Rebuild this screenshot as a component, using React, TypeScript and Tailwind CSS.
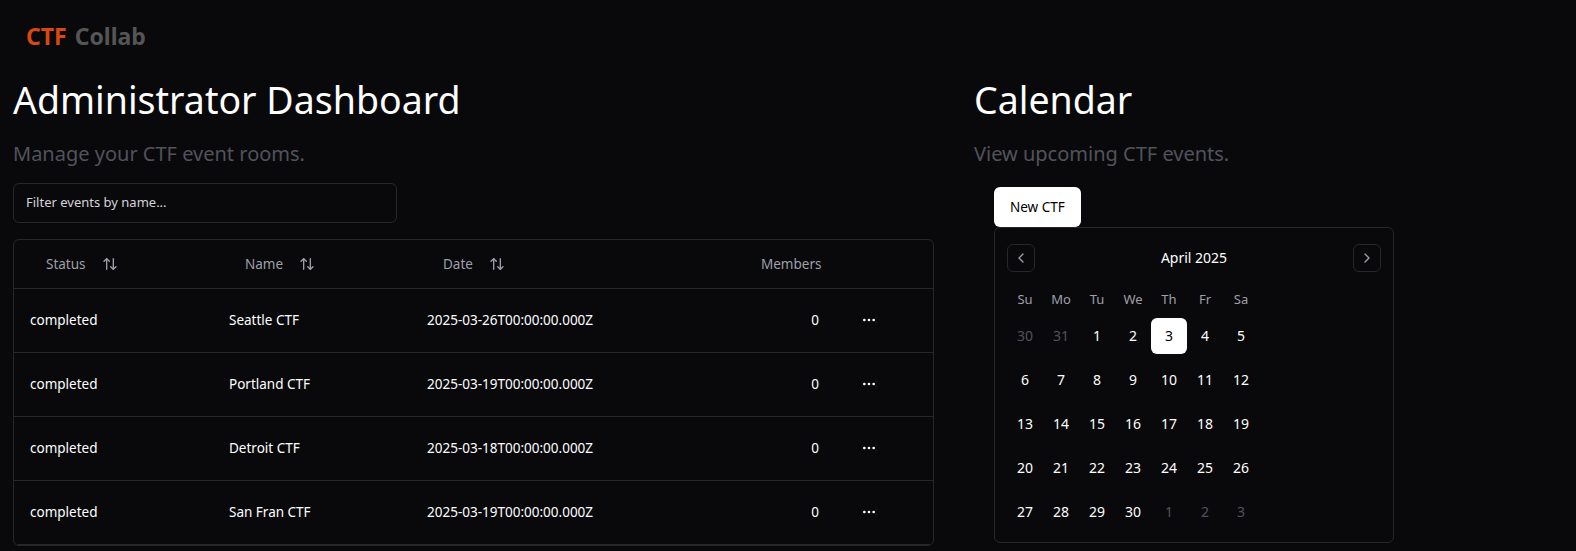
import { ArrowUpDown, ChevronLeft, ChevronRight, MoreHorizontal } from 'lucide-react';

interface Room {
  status: string;
  name: string;
  date: string;
  members: number;
}

const rooms: Room[] = [
  { status: 'completed', name: 'Seattle CTF', date: '2025-03-26T00:00:00.000Z', members: 0 },
  { status: 'completed', name: 'Portland CTF', date: '2025-03-19T00:00:00.000Z', members: 0 },
  { status: 'completed', name: 'Detroit CTF', date: '2025-03-18T00:00:00.000Z', members: 0 },
  { status: 'completed', name: 'San Fran CTF', date: '2025-03-19T00:00:00.000Z', members: 0 },
];

const weekdays = ['Su', 'Mo', 'Tu', 'We', 'Th', 'Fr', 'Sa'];

// April 2025 grid, with spill-over days from March / May
const weeks: { day: number; outside?: boolean; selected?: boolean }[][] = [
  [{ day: 30, outside: true }, { day: 31, outside: true }, { day: 1 }, { day: 2 }, { day: 3, selected: true }, { day: 4 }, { day: 5 }],
  [6, 7, 8, 9, 10, 11, 12].map((d) => ({ day: d })),
  [13, 14, 15, 16, 17, 18, 19].map((d) => ({ day: d })),
  [20, 21, 22, 23, 24, 25, 26].map((d) => ({ day: d })),
  [{ day: 27 }, { day: 28 }, { day: 29 }, { day: 30 }, { day: 1, outside: true }, { day: 2, outside: true }, { day: 3, outside: true }],
];

function SortHeader({ label }: { label: string }) {
  return (
    <button className="inline-flex items-center h-9 px-4 text-[13.5px] text-zinc-400">
      {label}
      <ArrowUpDown className="ml-4 w-4 h-4" strokeWidth={2} />
    </button>
  );
}

function Calendar() {
  return (
    <div className="w-[400px] rounded-md border border-zinc-800 px-3 pt-4 pb-3">
      <div className="relative flex items-center justify-center h-7">
        <button className="absolute left-0 top-0 w-7 h-7 flex items-center justify-center rounded-md border border-zinc-800 text-zinc-400">
          <ChevronLeft className="w-4 h-4" />
        </button>
        <span className="text-sm text-white">April 2025</span>
        <button className="absolute right-0 top-0 w-7 h-7 flex items-center justify-center rounded-md border border-zinc-800 text-zinc-400">
          <ChevronRight className="w-4 h-4" />
        </button>
      </div>
      <div className="mt-[18px] flex">
        {weekdays.map((w) => (
          <div key={w} className="w-9 text-center text-[13px] text-zinc-400">
            {w}
          </div>
        ))}
      </div>
      {weeks.map((week, i) => (
        <div key={i} className="mt-2 flex">
          {week.map((c, j) => (
            <div
              key={j}
              className={
                c.selected
                  ? 'w-9 h-9 flex items-center justify-center rounded-md bg-white text-sm text-black'
                  : c.outside
                  ? 'w-9 h-9 flex items-center justify-center text-sm text-zinc-600'
                  : 'w-9 h-9 flex items-center justify-center text-sm text-white'
              }
            >
              {c.day}
            </div>
          ))}
        </div>
      ))}
    </div>
  );
}

export default function App() {
  return (
    <div
      className="min-h-screen bg-[#09090b] text-white"
      style={{ fontFamily: "'Noto Sans', 'Open Sans', sans-serif" }}
    >
      {/* Top bar */}
      <div className="h-[72px] flex items-center px-[26px]">
        <span className="text-[23px] font-bold text-[#d9480f]">CTF</span>
        <span className="ml-2 text-[23px] font-bold text-[#555555]">Collab</span>
      </div>

      <div className="flex gap-10 px-[13px]">
        {/* Admin dashboard */}
        <div className="w-[921px] shrink-0">
          <h1 className="text-[37.5px] leading-[56px]">Administrator Dashboard</h1>
          <p className="mt-3 text-xl text-zinc-600">Manage your CTF event rooms.</p>
          <div className="mt-[15px] w-[384px] h-10 rounded-md border border-zinc-800 flex items-center px-3 text-[13px] text-zinc-300">
            Filter events by name...
          </div>
          <div className="mt-4 rounded-md border border-zinc-800 overflow-hidden">
            <table className="w-full table-fixed text-[13.5px]">
              <thead>
                <tr className="h-12 border-b border-zinc-800">
                  <th className="w-[199px] px-4 text-left font-normal"><SortHeader label="Status" /></th>
                  <th className="w-[198px] px-4 text-left font-normal"><SortHeader label="Name" /></th>
                  <th className="px-4 text-left font-normal"><SortHeader label="Date" /></th>
                  <th className="w-[90px] px-4 text-right font-normal text-zinc-400">Members</th>
                  <th className="w-[98px]" />
                </tr>
              </thead>
              <tbody>
                {rooms.map((r) => (
                  <tr key={r.name} className="h-16 border-b border-zinc-800">
                    <td className="px-4">{r.status}</td>
                    <td className="px-4">{r.name}</td>
                    <td className="px-4">{r.date}</td>
                    <td className="px-4 text-right">{r.members}</td>
                    <td className="pl-[18px] pr-4">
                      <button className="w-8 h-8 flex items-center justify-center">
                        <MoreHorizontal className="w-4 h-4" />
                      </button>
                    </td>
                  </tr>
                ))}
              </tbody>
            </table>
          </div>
        </div>

        {/* Calendar */}
        <div className="flex-1">
          <h1 className="text-[37.5px] leading-[56px]">Calendar</h1>
          <p className="mt-3 text-xl text-zinc-600">View upcoming CTF events.</p>
          <div className="mt-[19px] px-5">
            <button className="h-10 px-4 rounded-md bg-white text-[13.5px] text-black">New CTF</button>
            <Calendar />
          </div>
        </div>
      </div>
    </div>
  );
}
